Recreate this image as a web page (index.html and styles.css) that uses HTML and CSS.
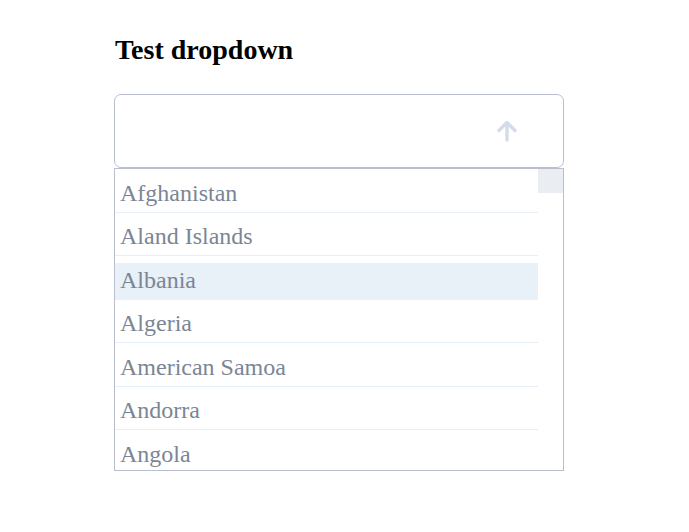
FILE: index.html
```html
<!DOCTYPE html>
<html>
<head>
<meta charset="utf-8">
<link rel="stylesheet" href="styles.css">
</head>
<body>
<div class="wrap">
  <h2 class="title">Test dropdown</h2>
  <div class="dropdown">
    <div class="control">
      <svg class="arrow" width="24" height="24" viewBox="0 0 24 24" fill="none" stroke="#d5dbe8" stroke-width="3.4" stroke-linecap="round" stroke-linejoin="round"><path d="M12 21V4"/><path d="M4 11.5L12 3.5L20 11.5"/></svg>
    </div>
    <div class="menu">
      <ul class="options">
        <li>Afghanistan</li>
        <li>Aland Islands</li>
        <li class="active">Albania</li>
        <li>Algeria</li>
        <li>American Samoa</li>
        <li>Andorra</li>
        <li>Angola</li>
      </ul>
      <div class="scrollbar"><div class="thumb"></div></div>
    </div>
  </div>
</div>
</body>
</html>
```
FILE: styles.css
```css
html, body {
  margin: 0;
  padding: 0;
  background: #ffffff;
}
body {
  font-family: "Liberation Serif", "Times New Roman", serif;
}
.wrap {
  width: 450px;
  padding: 34px 0 0 114px;
}
.title {
  margin: 0 0 28px 1px;
  font-size: 28px;
  font-weight: bold;
  line-height: 32px;
  color: #000;
}
.dropdown {
  display: flex;
  flex-direction: column;
}
.control {
  box-sizing: border-box;
  height: 74px;
  border: 1px solid #babfd0;
  border-radius: 7px;
  display: flex;
  align-items: center;
  justify-content: flex-end;
  padding-right: 44px;
}
.arrow {
  display: block;
}
.menu {
  box-sizing: border-box;
  height: 303px;
  border: 1px solid #babfd0;
  display: flex;
  overflow: hidden;
}
.options {
  flex: 1;
  list-style: none;
  margin: 0;
  padding: 0;
  overflow: hidden;
}
.scrollbar {
  width: 25px;
  flex: none;
}
.thumb {
  height: 24px;
  background: #eaedf2;
}
.options li {
  box-sizing: border-box;
  margin-top: 6.5px;
  height: 37px;
  line-height: 34px;
  padding: 0 0 2px 5px;
  border-bottom: 1px solid #e6eef7;
  font-size: 24px;
  color: #7b8595;
  white-space: nowrap;
}
.options li.active {
  background: #e8f0f8;
  border-bottom-color: transparent;
}
```
